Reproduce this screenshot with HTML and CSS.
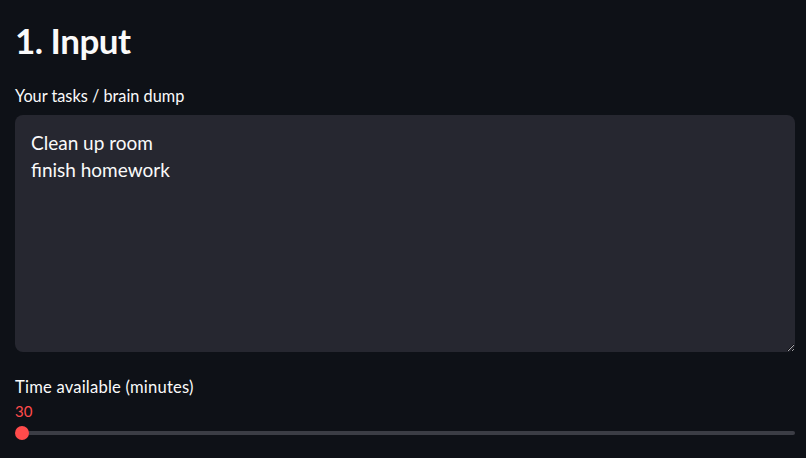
FILE: index.html
```html
<!DOCTYPE html>
<html>
<head>
<meta charset="utf-8">
<link rel="stylesheet" href="styles.css">
</head>
<body>
<main class="main">
  <h1 class="title">1. Input</h1>
  <div class="field">
    <label class="label">Your tasks / brain dump</label>
    <div class="textarea-wrap">
      <textarea class="textarea">Clean up room
finish homework</textarea>
    </div>
  </div>
  <div class="slider">
    <div class="label label-wide">Time available (minutes)</div>
    <div class="slider-value">30</div>
    <div class="track">
      <div class="thumb"></div>
    </div>
  </div>
</main>
</body>
</html>
```
FILE: styles.css
```css
html, body {
  margin: 0;
  padding: 0;
  background: #0e1117;
  height: 100%;
  overflow: hidden;
}
body {
  font-family: "Lato", "Noto Sans", sans-serif;
  color: #fafafa;
}
.main {
  padding: 16px 11px 0 15px;
}
.title {
  margin: 0;
  font-size: 35px;
  font-weight: 700;
  line-height: 48px;
  letter-spacing: -0.5px;
}
.field {
  margin-top: 22px;
}
.label {
  display: block;
  font-size: 16.3px;
  line-height: 20px;
  height: 20px;
}
.label-wide {
  font-size: 16.6px;
  letter-spacing: 0.2px;
}
.textarea-wrap {
  margin-top: 9px;
}
.textarea {
  display: block;
  box-sizing: border-box;
  width: 100%;
  height: 237px;
  background: #262730;
  border: none;
  border-radius: 8px;
  color: #fafafa;
  font-family: inherit;
  font-size: 19px;
  line-height: 27px;
  padding: 14px 16px;
  resize: vertical;
  outline: none;
}
.slider {
  margin-top: 25px;
}
.slider-value {
  color: #ff4b4b;
  font-size: 15px;
  line-height: 18px;
  margin-top: 5px;
}
.track {
  position: relative;
  margin: 11px 0 0 7px;
  height: 4px;
  border-radius: 2px;
  background: #3b3d45;
}
.thumb {
  position: absolute;
  left: -7px;
  top: -5px;
  width: 14px;
  height: 14px;
  border-radius: 50%;
  background: #ff4b4b;
}
```
